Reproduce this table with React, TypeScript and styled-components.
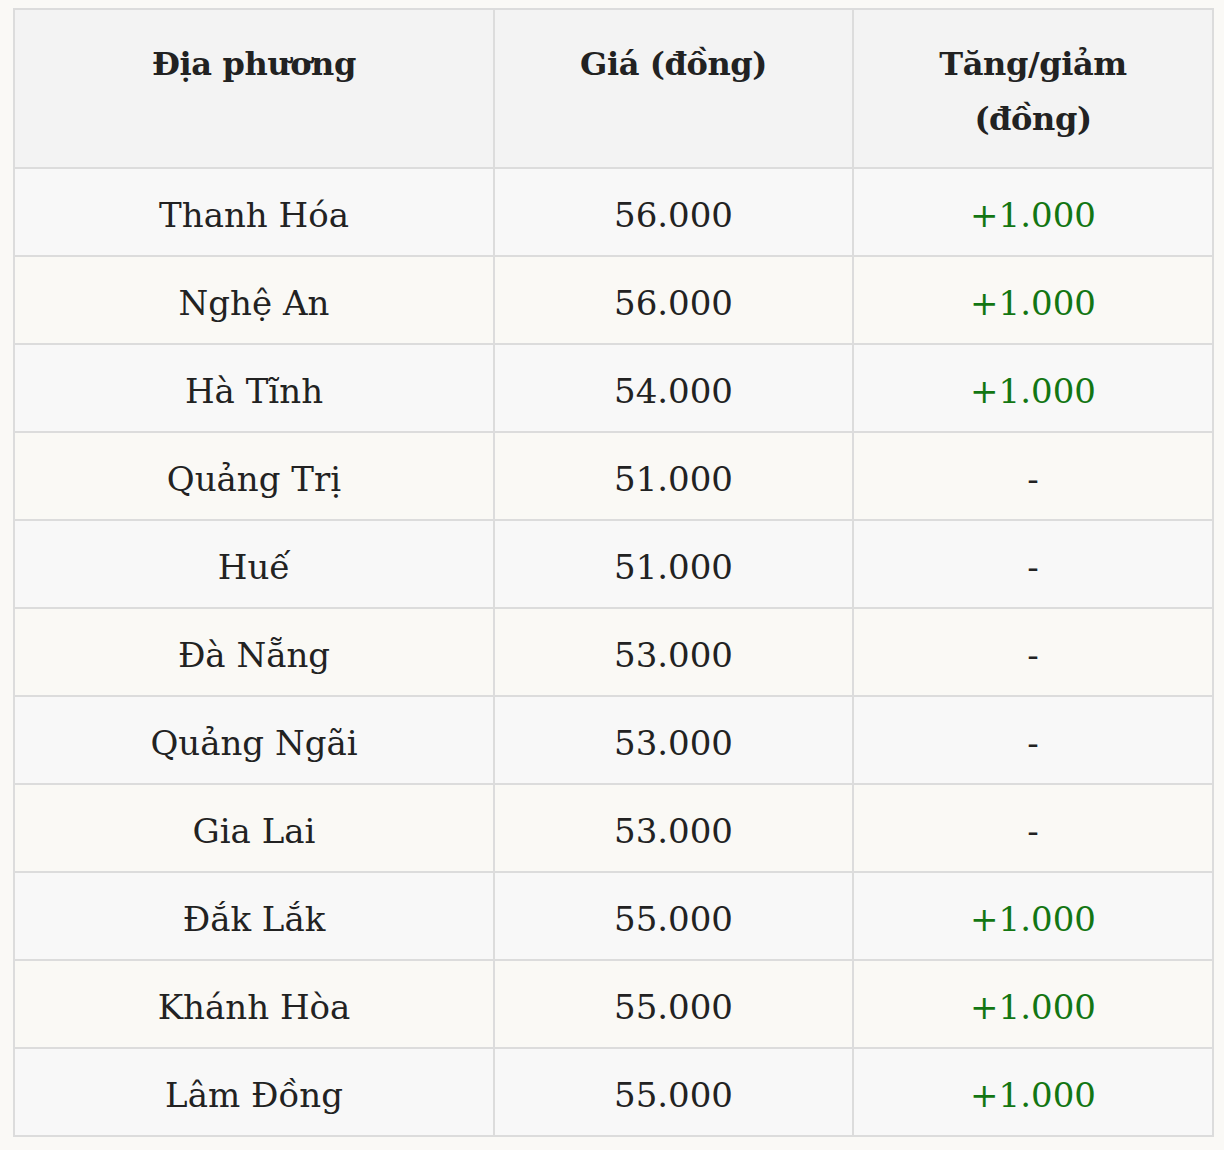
import { FC } from 'react';
import styled, { createGlobalStyle } from 'styled-components';

type TRow = {
  place: string;
  price: string;
  change: string | null;
};

const rows: TRow[] = [
  { place: 'Thanh Hóa', price: '56.000', change: '+1.000' },
  { place: 'Nghệ An', price: '56.000', change: '+1.000' },
  { place: 'Hà Tĩnh', price: '54.000', change: '+1.000' },
  { place: 'Quảng Trị', price: '51.000', change: null },
  { place: 'Huế', price: '51.000', change: null },
  { place: 'Đà Nẵng', price: '53.000', change: null },
  { place: 'Quảng Ngãi', price: '53.000', change: null },
  { place: 'Gia Lai', price: '53.000', change: null },
  { place: 'Đắk Lắk', price: '55.000', change: '+1.000' },
  { place: 'Khánh Hòa', price: '55.000', change: '+1.000' },
  { place: 'Lâm Đồng', price: '55.000', change: '+1.000' },
];

const GlobalStyle = createGlobalStyle`
  body {
    margin: 0;
    background: #faf9f6;
    font-family: 'DejaVu Serif', 'Liberation Serif', serif;
    color: #222;
  }
`;

const Page = styled.div`
  padding: 8px 11px 12px 13px;
`;

const Table = styled.table`
  width: 1199px;
  border-collapse: collapse;
  table-layout: fixed;
  border: 2px solid #dcdcdc;
`;

const Col = styled.col<{ $width: number }>`
  width: ${(p) => p.$width}px;
`;

const HeadCell = styled.th`
  background: #f3f3f3;
  border: 2px solid #dcdcdc;
  padding: 27px 40px 20px;
  font-size: 32px;
  letter-spacing: -0.4px;
  line-height: 55px;
  font-weight: 700;
  vertical-align: top;
  text-align: center;
  color: #222;
`;

const BodyRow = styled.tr<{ $odd: boolean }>`
  background: ${(p) => (p.$odd ? '#f8f8f8' : '#faf9f5')};
`;

const Cell = styled.td<{ $tone?: 'up' | 'plain' }>`
  border: 2px solid #dcdcdc;
  padding: 22px 20px 16px;
  font-size: 34px;
  line-height: 48px;
  text-align: center;
  color: ${(p) => (p.$tone === 'up' ? '#137613' : '#222')};
`;

const App: FC = () => {
  return (
    <Page>
      <GlobalStyle />
      <Table>
        <colgroup>
          <Col $width={480} />
          <Col $width={359} />
          <Col $width={360} />
        </colgroup>
        <thead>
          <tr>
            <HeadCell>Địa phương</HeadCell>
            <HeadCell>Giá (đồng)</HeadCell>
            <HeadCell>Tăng/giảm (đồng)</HeadCell>
          </tr>
        </thead>
        <tbody>
          {rows.map((row, i) => (
            <BodyRow key={row.place} $odd={i % 2 === 0}>
              <Cell>{row.place}</Cell>
              <Cell>{row.price}</Cell>
              <Cell $tone={row.change ? 'up' : 'plain'}>{row.change ?? '-'}</Cell>
            </BodyRow>
          ))}
        </tbody>
      </Table>
    </Page>
  );
};

export default App;
